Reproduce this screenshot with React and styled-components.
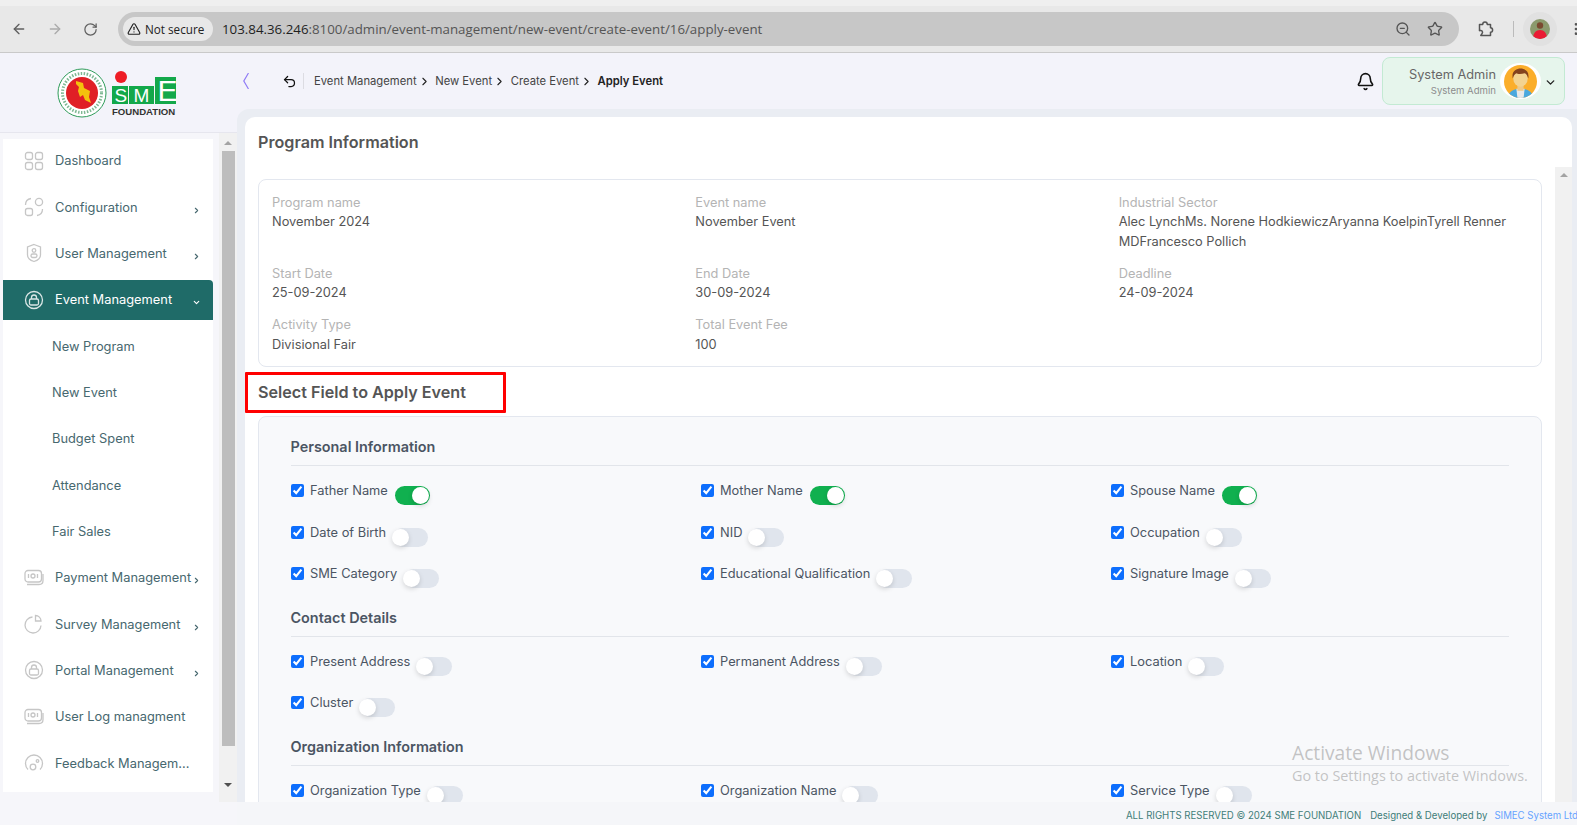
import React from "react";
import styled, { createGlobalStyle } from "styled-components";
import {
  ArrowLeft,
  ArrowRight,
  RotateCw,
  TriangleAlert,
  ZoomOut,
  Star,
  EllipsisVertical,
  Bell,
  Undo2,
  ChevronRight,
  ChevronDown,
} from "lucide-react";

const GlobalStyle = createGlobalStyle`
  html, body {
    margin: 0;
    height: 100%;
    overflow: hidden;
    background: #f3f3fa;
    font-family: Inter, "Liberation Sans", sans-serif;
  }
  * { box-sizing: border-box; }
`;

const Page = styled.div`
  position: relative;
  height: 100vh;
  display: flex;
  flex-direction: column;
  overflow: hidden;
`;

/* browser chrome */
const BrowserBar = styled.div`
  flex: none;
  height: 53px;
  display: flex;
  align-items: center;
  padding: 0 0 0 11px;
  background: #e8e8e8;
  border-top: 6px solid #efefef;
  border-bottom: 1px solid #c9c9c9;
  color: #5b5b5b;
`;

const NavIcon = styled.span`
  width: 36px;
  flex: none;
  display: flex;
  color: ${(p) => (p.$off ? "#ababab" : "#5f5f5f")};
`;

const Omnibox = styled.div`
  width: 1341px;
  margin-left: -1px;
  height: 34px;
  flex: none;
  display: flex;
  align-items: center;
  padding: 0 16px 0 5px;
  border-radius: 17px;
  background: #c7c7c7;
`;

const SecureChip = styled.div`
  width: 90px;
  height: 24px;
  flex: none;
  display: flex;
  align-items: center;
  gap: 4px;
  padding-left: 4px;
  border-radius: 12px;
  background: #e8e8e8;
  color: #222;
  font: 11.7px "Open Sans", sans-serif;
  white-space: nowrap;
`;

const Url = styled.div`
  flex: 1;
  margin-left: 9px;
  font: 13.3px "Open Sans", sans-serif;
  color: #555;
  white-space: nowrap;

  b {
    font-weight: 400;
    color: #1f1f1f;
  }
`;

const OmniIcons = styled.div`
  display: flex;
  gap: 16px;
  color: #555;
`;

const ChromeTools = styled.div`
  display: flex;
  align-items: center;
  color: #555;
  margin-left: 18px;
`;

const ToolDivider = styled.span`
  width: 1px;
  height: 16px;
  margin: 0 9px 0 18px;
  background: #bbb;
`;

const ProfileDot = styled.span`
  width: 34px;
  height: 34px;
  display: flex;
  align-items: center;
  justify-content: center;
  border-radius: 50%;
  background: #e1e1e1;
  margin-right: 11px;
`;

const Shell = styled.div`
  flex: 1;
  min-height: 0;
  display: flex;
`;

/* left column */
const Side = styled.aside`
  width: 237px;
  flex: none;
  display: flex;
  flex-direction: column;
`;

const Brand = styled.div`
  height: 80px;
  flex: none;
  display: flex;
  align-items: center;
  padding-left: 55px;
  border-bottom: 1px solid #e6e6ee;
`;

const SideBody = styled.div`
  flex: 1;
  min-height: 0;
  display: flex;
  align-items: flex-start;
  padding-left: 3px;
  background: #f6f6fa;
`;

const NavPanel = styled.nav`
  width: 210px;
  height: 653px;
  margin-top: 6px;
  padding: 1.7px 0 0;
  display: grid;
  grid-auto-rows: 40px;
  row-gap: 6.35px;
  overflow: hidden;
  background: #fff;
`;

const NavRow = styled.div`
  display: flex;
  align-items: center;
  padding-left: ${(p) => (p.$sub ? "49px" : "21px")};
  border-radius: ${(p) => (p.$active ? "0 4px 0 0" : "0")};
  background: ${(p) => (p.$active ? "#1f6b68" : "transparent")};
  color: ${(p) => (p.$active ? "#fff" : "#47686f")};
  font-size: 12.85px;
  white-space: nowrap;
`;

const NavGlyph = styled.svg`
  width: 20px;
  height: 20px;
  flex: none;
  margin-right: 11px;
  fill: none;
  stroke: ${(p) => (p.$active ? "#d9e6e5" : "#c6c6c6")};
  stroke-width: 1.3;
`;

const NavLabel = styled.span`
  flex: 1;
  min-width: 0;
`;

const NavArrow = styled.span`
  width: 21px;
  flex: none;
  display: flex;
  margin-top: 6px;
  color: ${(p) => (p.$active ? "#fff" : "#47686f")};
`;

const SideScroll = styled.div`
  width: 18px;
  height: 669px;
  margin-left: 6px;
  flex: none;
  display: flex;
  flex-direction: column;
  align-items: center;
  background: #f1f1f1;
`;

const ScrollArrow = styled.span`
  width: 0;
  height: 0;
  flex: none;
  margin: ${(p) => p.$margin};
  border-left: 4px solid transparent;
  border-right: 4px solid transparent;
  ${(p) => (p.$down ? "border-top: 4px solid #505050;" : "border-bottom: 4px solid #a3a3a3;")}
`;

const ScrollThumb = styled.div`
  width: 13px;
  height: 595px;
  flex: none;
  background: #bdbdbd;
`;

/* right column */
const Content = styled.div`
  flex: 1;
  min-width: 0;
  display: flex;
  flex-direction: column;
`;

const TopBar = styled.header`
  height: 56px;
  flex: none;
  display: flex;
  align-items: center;
  padding: 0 12px 0 6px;
  background: #f3f3fa;
`;

const BackGroup = styled.div`
  display: flex;
  align-items: center;
  margin-left: 33px;
  padding-right: 6px;
  margin-right: 10px;
  height: 16px;
  border-right: 1px solid #dcdce2;
  color: #111;
`;

const Crumbs = styled.div`
  flex: 1;
  display: flex;
  align-items: center;
  font-size: 11.25px;
  color: #444;
`;

const Crumb = styled.span`
  font-weight: ${(p) => (p.$current ? 600 : 400)};
  color: ${(p) => (p.$current ? "#222" : "#444")};
`;

const CrumbArrow = styled.span`
  display: flex;
  width: 18.6px;
  padding-left: 1px;
  color: #222;
`;

const ProfileBox = styled.div`
  width: 183px;
  height: 48px;
  margin-left: 7px;
  display: flex;
  align-items: center;
  justify-content: flex-end;
  padding: 2px 7px 0 0;
  border: 1px solid #c3ead3;
  border-radius: 8px;
  background: #e6f5ec;
`;

const ProfileText = styled.div`
  text-align: right;
  white-space: nowrap;
`;

const ProfileName = styled.div`
  font-size: 12.8px;
  line-height: 17px;
  color: #666;
`;

const ProfileRole = styled.div`
  font-size: 9.6px;
  line-height: 15px;
  color: #8c8c8c;
`;

const AvatarRing = styled.div`
  width: 41px;
  height: 36px;
  margin: -2px 3px 0 4px;
  display: flex;
  align-items: center;
  justify-content: center;
  border-radius: 50%;
  background: #fff;
`;

const Main = styled.main`
  flex: 1;
  min-height: 0;
  padding: 8px 5px 0 8px;
  border-radius: 12px 0 0 0;
  background: #eaedf3;
`;

const Sheet = styled.section`
  height: 100%;
  display: flex;
  flex-direction: column;
  border-radius: 10px 10px 0 0;
  background: #fff;
`;

const SheetHead = styled.div`
  height: 50px;
  flex: none;
  display: flex;
  align-items: center;
  padding-left: 13px;
`;

const Heading = styled.h2`
  margin: 0;
  font-size: 16.15px;
  font-weight: 600;
  color: #555;
`;

const SheetBody = styled.div`
  flex: 1;
  min-height: 0;
  display: flex;
  overflow: hidden;
`;

const Scroller = styled.div`
  flex: 1;
  min-width: 0;
  padding: 12px 13px 0;
`;

const SheetTrack = styled.div`
  width: 17px;
  flex: none;
  display: flex;
  justify-content: center;
  background: #f1f1f1;
`;

const InfoCard = styled.div`
  height: 188px;
  padding: 12.5px 13px 0;
  display: grid;
  grid-template-columns: repeat(3, 1fr);
  column-gap: 14px;
  row-gap: 12.7px;
  align-content: start;
  border: 1px solid #e3e7ef;
  border-radius: 8px;
  font-size: 12.8px;
  line-height: 19.5px;
`;

const InfoLabel = styled.div`
  color: #b4b4b4;
`;

const InfoValue = styled.div`
  color: #555;
`;

const ApplyHead = styled.div`
  position: relative;
  height: 49px;
  padding-top: 1px;
  display: flex;
  align-items: center;
`;

const Annotation = styled.span`
  position: absolute;
  left: -13px;
  top: 5px;
  width: 261px;
  height: 41px;
  border: 3px solid #f00;
  border-radius: 1px;
`;

const FormPanel = styled.div`
  padding: 20px 32px 40px;
  border: 1px solid #e3e7ef;
  border-radius: 8px;
  background: #f8f9fb;
`;

const GroupTitle = styled.h3`
  margin: 0 0 0 -0.5px;
  height: 20px;
  font-size: 14.4px;
  line-height: 20px;
  font-weight: 600;
  color: #4b5563;
`;

const GroupRule = styled.div`
  height: 1px;
  margin: 8px 0 18px;
  background: #e2e5ea;
`;

const FieldGrid = styled.div`
  display: grid;
  grid-template-columns: repeat(3, 1fr);
  column-gap: 12px;
  grid-auto-rows: 41.5px;
  margin-bottom: -1px;
`;

const Field = styled.label`
  display: flex;
  align-items: flex-start;
  font-size: 12.85px;
  line-height: 13px;
  color: #4b5563;
  white-space: nowrap;
`;

const Check = styled.input`
  width: 13px;
  height: 13px;
  margin: 0 6px 0 0;
  flex: none;
  accent-color: #0d6efd;
`;

const Toggle = styled.span`
  position: relative;
  width: 35px;
  height: 19px;
  margin: 2px 0 0 7px;
  flex: none;
  border-radius: 10px;
  background: ${(p) => (p.$on ? "#10b04f" : "#e0e5ed")};

  &::after {
    content: "";
    position: absolute;
    top: 1px;
    left: ${(p) => (p.$on ? "17px" : "-1px")};
    width: 17px;
    height: 17px;
    border-radius: 50%;
    background: #fff;
    box-shadow: 0 2px 5px rgba(0, 0, 0, 0.15);
  }
`;

const Footer = styled.footer`
  position: absolute;
  right: 0;
  bottom: 0;
  left: 237px;
  height: 23px;
  display: flex;
  justify-content: flex-end;
  align-items: center;
  gap: 9px;
  padding-top: 3px;
  background: #f5f6f9;
  font-size: 9.65px;
  color: #3f7d78;
  white-space: nowrap;
`;

const FooterLink = styled.span`
  color: #66a3ff;
  margin: 0 -1px 0 -2px;
`;

const Watermark = styled.div`
  position: absolute;
  left: 1292px;
  top: 739px;
  font-family: "Open Sans", sans-serif;
  color: rgba(140, 140, 140, 0.5);
  pointer-events: none;
  white-space: nowrap;
`;

const WatermarkTitle = styled.div`
  font-size: 19.2px;
  line-height: 27px;
`;

const WatermarkNote = styled.div`
  font-size: 14.4px;
  line-height: 20px;
`;

const icons = {
  grid: (
    <>
      <rect x="1.5" y="1.5" width="7" height="7" rx="2" />
      <rect x="11.5" y="1.5" width="7" height="7" rx="2" />
      <rect x="1.5" y="11.5" width="7" height="7" rx="2" />
      <rect x="11.5" y="11.5" width="7" height="7" rx="2" />
    </>
  ),
  config: (
    <>
      <circle cx="15" cy="5" r="3.6" />
      <rect x="1.5" y="11.5" width="7" height="7" rx="2" />
      <path d="M1.5 8c0-3.5 2-6 5.5-6.5M18.5 12c0 3.5-2 6-5.5 6.5" />
    </>
  ),
  shield: (
    <>
      <path d="M10 1.5l6.5 2.5v8c0 3.5-3 5.5-6.5 6.5-3.5-1-6.5-3-6.5-6.500V4z" />
      <circle cx="10" cy="7.5" r="1.8" />
      <rect x="7" y="11" width="6" height="3.5" rx="1.7" />
    </>
  ),
  lock: (
    <>
      <circle cx="10" cy="10" r="8.5" />
      <rect x="5.5" y="9" width="9" height="6" rx="1.5" />
      <path d="M7.5 9V7.5a2.5 2.5 0 0 1 5 0V9" />
    </>
  ),
  money: (
    <>
      <rect x="1" y="2.5" width="16.5" height="11.5" rx="3" />
      <path d="M3 16.5h12c2.5 0 4-1.5 4-4V6" />
      <circle cx="9" cy="8" r="2" />
      <path d="M4.5 6v4M13.5 6v4" />
    </>
  ),
  pie: (
    <>
      <path d="M8.5 3a8 8 0 1 0 8.5 8.5" />
      <path d="M11.5 1.5a5.5 5.5 0 0 1 5.5 5.5h-5.5z" />
    </>
  ),
  feedback: (
    <>
      <path d="M4 16.5a8.500 8.500 0 1 1 12 0" />
      <circle cx="9" cy="14" r="2.8" />
      <circle cx="13.5" cy="8" r="1.3" />
    </>
  ),
};

const navItems = [
  { label: "Dashboard", icon: "grid" },
  { label: "Configuration", icon: "config", arrow: true },
  { label: "User Management", icon: "shield", arrow: true },
  { label: "Event Management", icon: "lock", arrow: true, active: true },
  { label: "New Program", sub: true },
  { label: "New Event", sub: true },
  { label: "Budget Spent", sub: true },
  { label: "Attendance", sub: true },
  { label: "Fair Sales", sub: true },
  { label: "Payment Management", icon: "money", arrow: true },
  { label: "Survey Management", icon: "pie", arrow: true },
  { label: "Portal Management", icon: "lock", arrow: true },
  { label: "User Log managment", icon: "money" },
  { label: "Feedback Managem...", icon: "feedback" },
];

const info = [
  ["Program name", ["November 2024"]],
  ["Event name", ["November Event"]],
  ["Industrial Sector", ["Alec LynchMs. Norene HodkiewiczAryanna KoelpinTyrell Renner", "MDFrancesco Pollich"]],
  ["Start Date", ["25-09-2024"]],
  ["End Date", ["30-09-2024"]],
  ["Deadline", ["24-09-2024"]],
  ["Activity Type", ["Divisional Fair"]],
  ["Total Event Fee", ["100"]],
];

const groups = [
  {
    title: "Personal Information",
    fields: [
      ["Father Name", true],
      ["Mother Name", true],
      ["Spouse Name", true],
      ["Date of Birth"],
      ["NID"],
      ["Occupation"],
      ["SME Category"],
      ["Educational Qualification"],
      ["Signature Image"],
    ],
  },
  {
    title: "Contact Details",
    fields: [["Present Address"], ["Permanent Address"], ["Location"], ["Cluster"]],
  },
  {
    title: "Organization Information",
    fields: [["Organization Type"], ["Organization Name"], ["Service Type"]],
  },
];

const crumbs = ["Event Management", "New Event", "Create Event"];

const Logo = () => (
  <svg width="124" height="64" viewBox="0 0 124 64">
    <circle cx="27" cy="32" r="24" fill="#fff" stroke="#2f9c5a" strokeWidth="1" />
    <circle cx="27" cy="32" r="19.5" fill="none" stroke="#7fb894" strokeWidth="3" strokeDasharray="1.5 1.5" />
    <circle cx="27" cy="32" r="16" fill="#e01f26" />
    <path d="M21 20l7 2 1 5 6 3-1 6 2 6-6-3-2-5-3 2-2-6 1-4-3-3z" fill="#f4c20d" />
    <circle cx="66" cy="16" r="6" fill="#ee1c25" />
    <rect x="57" y="25" width="16" height="18" fill="#13a84a" />
    <rect x="74" y="25" width="25" height="18" fill="#13a84a" />
    <rect x="100" y="16" width="21" height="27" fill="#13a84a" />
    <g fill="#fff" fontFamily="Liberation Sans, sans-serif">
      <text x="59.5" y="41" fontSize="19">S</text>
      <text x="78.5" y="41" fontSize="19">M</text>
      <text x="102.5" y="40" fontSize="30">E</text>
    </g>
    <text x="57" y="54" fontFamily="Liberation Sans, sans-serif" fontWeight="700" fontSize="9.6" fill="#333">
      FOUNDATION
    </text>
  </svg>
);

const UserFace = () => (
  <svg width="33" height="33" viewBox="0 0 32 32">
    <clipPath id="faceClip">
      <circle cx="16" cy="16" r="16" />
    </clipPath>
    <g clipPath="url(#faceClip)">
      <rect width="32" height="32" fill="#fbae2b" />
      <path d="M4 32c0-6 5-9 12-9s12 3 12 9z" fill="#4aa8de" />
      <path d="M12 23h8l-1 9h-6z" fill="#e8e8e8" />
      <rect x="13" y="18" width="6" height="7" fill="#eec98a" />
      <ellipse cx="16" cy="13" rx="7" ry="8" fill="#f3d391" />
      <path d="M8.5 13C7 6 12 3.5 16 3.5S25 6 23.5 13c-1-3-2-4.5-3.5-5-3 1-7 1-8 0-2 1-3 3-3.5 5z" fill="#85431d" />
    </g>
  </svg>
);

const ChromeAvatar = () => (
  <svg width="20" height="20" viewBox="0 0 20 20">
    <clipPath id="chromeClip">
      <circle cx="10" cy="10" r="10" />
    </clipPath>
    <g clipPath="url(#chromeClip)">
      <rect width="20" height="20" fill="#8b9a6d" />
      <path d="M3 20c0-6 3-9 7-9s7 3 7 9z" fill="#ea1c34" />
      <circle cx="10" cy="6.5" r="3.2" fill="#7a4a30" />
    </g>
  </svg>
);

const ExtensionIcon = () => (
  <svg width="18" height="18" viewBox="0 0 18 18" fill="none" stroke="currentColor" strokeWidth="1.5" strokeLinejoin="round">
    <path d="M2.5 4.5h3.2c0-3.5 4.6-3.5 4.6 0h3.2v3.2c2.8 0 2.8 4.6 0 4.6v3.2H3.8l1.2-1.800c1.500-2-.5-4-2.500-3z" />
  </svg>
);

const App = () => (
  <Page>
    <GlobalStyle />
    <BrowserBar>
      <NavIcon><ArrowLeft size={16} /></NavIcon>
      <NavIcon $off><ArrowRight size={16} /></NavIcon>
      <NavIcon><RotateCw size={15} /></NavIcon>
      <Omnibox>
        <SecureChip>
          <TriangleAlert size={14} />
          Not secure
        </SecureChip>
        <Url>
          <b>103.84.36.246</b>:8100/admin/event-management/new-event/create-event/16/apply-event
        </Url>
        <OmniIcons>
          <ZoomOut size={16} />
          <Star size={16} />
        </OmniIcons>
      </Omnibox>
      <ChromeTools>
        <ExtensionIcon />
        <ToolDivider />
        <ProfileDot><ChromeAvatar /></ProfileDot>
        <EllipsisVertical size={16} />
      </ChromeTools>
    </BrowserBar>
    <Shell>
      <Side>
        <Brand><Logo /></Brand>
        <SideBody>
          <NavPanel>
            {navItems.map((item) => (
              <NavRow key={item.label} $sub={item.sub} $active={item.active}>
                {item.icon && (
                  <NavGlyph viewBox="0 0 20 20" $active={item.active}>
                    {icons[item.icon]}
                  </NavGlyph>
                )}
                <NavLabel>{item.label}</NavLabel>
                {item.arrow && (
                  <NavArrow $active={item.active}>
                    {item.active ? <ChevronDown size={9} strokeWidth={3} /> : <ChevronRight size={9} strokeWidth={3} />}
                  </NavArrow>
                )}
              </NavRow>
            ))}
          </NavPanel>
          <SideScroll>
            <ScrollArrow $margin="8px 0 6px" />
            <ScrollThumb />
            <ScrollArrow $down $margin="37px 0 0" />
          </SideScroll>
        </SideBody>
      </Side>
      <Content>
        <TopBar>
          <svg width="6" height="16" viewBox="0 0 6 16" fill="none" stroke="#8f7bf5" strokeWidth="1.2">
            <path d="M5.5 0L.8 8l4.7 8" />
          </svg>
          <BackGroup><Undo2 size={15} /></BackGroup>
          <Crumbs>
            {crumbs.map((crumb) => (
              <React.Fragment key={crumb}>
                <Crumb>{crumb}</Crumb>
                <CrumbArrow><ChevronRight size={13} strokeWidth={2} /></CrumbArrow>
              </React.Fragment>
            ))}
            <Crumb $current>Apply Event</Crumb>
          </Crumbs>
          <Bell size={19} color="#111" />
          <ProfileBox>
            <ProfileText>
              <ProfileName>System Admin</ProfileName>
              <ProfileRole>System Admin</ProfileRole>
            </ProfileText>
            <AvatarRing><UserFace /></AvatarRing>
            <ChevronDown size={13} strokeWidth={2.5} color="#222" />
          </ProfileBox>
        </TopBar>
        <Main>
          <Sheet>
            <SheetHead><Heading>Program Information</Heading></SheetHead>
            <SheetBody>
              <Scroller>
                <InfoCard>
                  {info.map(([label, lines]) => (
                    <div key={label}>
                      <InfoLabel>{label}</InfoLabel>
                      {lines.map((line) => <InfoValue key={line}>{line}</InfoValue>)}
                    </div>
                  ))}
                </InfoCard>
                <ApplyHead>
                  <Heading>Select Field to Apply Event</Heading>
                  <Annotation />
                </ApplyHead>
                <FormPanel>
                  {groups.map((group) => (
                    <div key={group.title}>
                      <GroupTitle>{group.title}</GroupTitle>
                      <GroupRule />
                      <FieldGrid>
                        {group.fields.map(([name, on]) => (
                          <Field key={name}>
                            <Check type="checkbox" checked readOnly />
                            {name}
                            <Toggle $on={on} />
                          </Field>
                        ))}
                      </FieldGrid>
                    </div>
                  ))}
                </FormPanel>
              </Scroller>
              <SheetTrack><ScrollArrow $margin="6px 0 0" /></SheetTrack>
            </SheetBody>
          </Sheet>
        </Main>
      </Content>
    </Shell>
    <Footer>
      <span>ALL RIGHTS RESERVED © 2024 SME FOUNDATION</span>
      <span>Designed &amp; Developed by</span>
      <FooterLink>SIMEC System Ltd</FooterLink>
    </Footer>
    <Watermark>
      <WatermarkTitle>Activate Windows</WatermarkTitle>
      <WatermarkNote>Go to Settings to activate Windows.</WatermarkNote>
    </Watermark>
  </Page>
);

export default App;
